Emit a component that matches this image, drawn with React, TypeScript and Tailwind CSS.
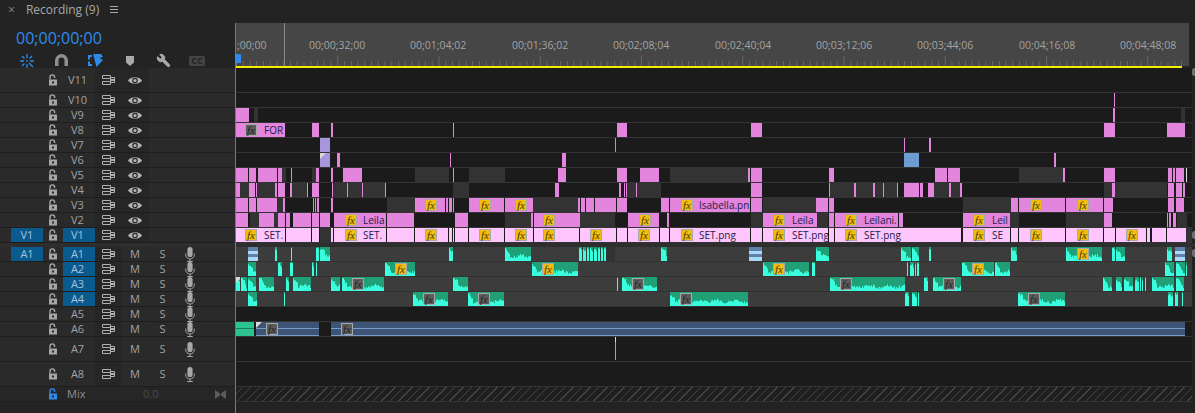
import { Wrench } from "lucide-react";

type Kind = "p" | "l" | "g" | "u" | "b" | "a" | "s" | "w" | "d" | "e";
// start x, end x (page pixels), kind, fx badge x (negative: grey badge), label, label x, corner triangle
type Clip = [number, number, Kind, number?, string?, number?, boolean?];

const ORIGIN = 235;

const kindClass: Record<Kind, string> = {
  p: "bg-[#e384dd]",
  l: "bg-[#fec6fd]",
  g: "bg-[#333333]",
  u: "bg-[#a994de]",
  b: "bg-[#6f9bd1]",
  a: "bg-[#21a078]",
  s: "bg-[linear-gradient(#5f80a8_0_4px,#a9d9f7_4px_7px,#5f80a8_7px_10px,#a9d9f7_10px_14px)]",
  w: "bg-[#dddddd]",
  d: "bg-[#333333]",
  e: "bg-[#2bc48f]",
};

const pinks = (list: number[][], kind: Kind = "p"): Clip[] => list.map(([a, b]) => [a, b, kind] as Clip);

const V10: Clip[] = pinks([[1114, 1115]]);
const V9: Clip[] = [[236, 249, "p"], [254, 258, "g"], [1113, 1115, "p"], [1181, 1185, "g"]];
const V8: Clip[] = [
  [236, 285, "p", -245, "FOR", 264],
  ...pinks([[312, 319], [331, 333], [453, 454], [617, 627], [751, 762], [1104, 1115], [1167, 1185]]),
];
const V7: Clip[] = [[320, 330, "u"], [615, 616, "u"], ...pinks([[904, 905], [929, 931]])];
const V6: Clip[] = [
  [320, 330, "u", undefined, undefined, undefined, true],
  ...pinks([[337, 340], [450, 451], [562, 566], [1054, 1056]]),
  [904, 919, "b"],
];
const V5: Clip[] = [
  ...pinks([[236, 248], [249, 256], [258, 277], [278, 282], [291, 292], [316, 319], [331, 333], [343, 362], [453, 454], [558, 566], [617, 627], [640, 659], [748, 750], [751, 762], [829, 834], [935, 947], [948, 960], [1063, 1065], [1104, 1115], [1168, 1172], [1173, 1175], [1176, 1184]]),
  ...pinks([[282, 286], [312, 316], [415, 449], [469, 505], [670, 748], [1019, 1063]], "g"),
  [1186, 1187, "w"],
];
const V4: Clip[] = [
  ...pinks([[240, 249], [257, 275], [292, 307], [333, 347], [348, 362], [363, 385], [453, 469], [627, 636], [637, 661], [830, 854], [856, 873], [875, 883], [884, 897], [934, 949], [951, 960], [1104, 1112], [1115, 1167]], "g"),
  ...pinks([[236, 240], [249, 255], [256, 257], [275, 277], [278, 285], [290, 292], [307, 308], [312, 319], [332, 333], [347, 348], [362, 363], [385, 386], [555, 559], [619, 621], [624, 625], [626, 627], [636, 637], [751, 762], [829, 830], [854, 856], [873, 875], [883, 884], [897, 898], [904, 919], [920, 923], [928, 934], [949, 951], [960, 962], [1112, 1115], [1168, 1174], [1176, 1182], [1183, 1185]]),
];
const V3: Clip[] = [
  ...pinks([[236, 248], [249, 256], [257, 277], [283, 285], [313, 314], [315, 316], [317, 319], [331, 333], [446, 448], [449, 452], [453, 454], [578, 580], [581, 585], [586, 594], [595, 616], [617, 627], [661, 669], [751, 762], [816, 828], [829, 834], [1011, 1018], [1104, 1113], [1168, 1174], [1176, 1184]]),
  ...pinks([[277, 283], [387, 415], [533, 578], [763, 816], [963, 1011]], "g"),
  [415, 445, "p", 425],
  [469, 504, "p", 479],
  [505, 533, "p", 515],
  [670, 750, "p", 681, "Isabella.pn", 699],
  [1019, 1065, "p", 1030],
  [1066, 1103, "p", 1077],
];
const V2: Clip[] = [
  ...pinks([[236, 248], [259, 274], [278, 285], [286, 290], [293, 311], [312, 319], [320, 330], [387, 414], [455, 468], [531, 533], [560, 580], [667, 669], [829, 834], [899, 903], [1104, 1112], [1167, 1168], [1169, 1171], [1173, 1176]]),
  ...pinks([[250, 259], [274, 278], [505, 531], [580, 615], [751, 763], [817, 828], [1010, 1019], [1066, 1104], [1177, 1187]], "g"),
  [334, 386, "p", 345, "Leila", 363],
  [534, 560, "p", 543],
  [628, 659, "p", 639],
  [763, 817, "p", 773, "Leila", 792],
  [835, 898, "p", 845, "Leilani.", 864],
  [963, 1010, "p", 973, "Leil", 992],
];
const V1: Clip[] = [
  [236, 285, "l", 245, "SET.", 264],
  ...pinks([[286, 311], [312, 319], [331, 333], [387, 414], [449, 452], [453, 454], [455, 468], [560, 579], [617, 627], [660, 669], [751, 762], [829, 834], [1011, 1018], [1104, 1115], [1147, 1150], [1152, 1166], [1167, 1186]], "l"),
  [320, 331, "g"],
  [334, 386, "l", 345, "SET.", 363],
  [415, 448, "l", 425],
  [469, 504, "l", 479],
  [505, 533, "l", 515],
  [534, 560, "l", 543],
  [580, 616, "l", 590],
  [628, 659, "l", 638],
  [670, 750, "l", 681, "SET.png", 699],
  [763, 828, "l", 773, "SET.png", 792],
  [835, 961, "l", 845, "SET.png", 864],
  [963, 1010, "l", 973, "SE", 992],
  [1019, 1065, "l", 1030],
  [1066, 1103, "l", 1077],
  [1116, 1146, "l", 1126],
  [1186, 1192, "g"],
];
const A1: Clip[] = [
  [248, 258, "s"],
  ...pinks([[275, 277], [291, 292], [316, 319], [320, 330], [449, 453], [505, 531], [579, 582], [583, 586], [587, 589], [590, 593], [594, 597], [598, 600], [601, 603], [604, 606], [661, 667], [816, 829], [901, 911], [912, 919], [929, 931], [1011, 1017], [1112, 1115], [1116, 1125], [1167, 1172]], "a"),
  [606, 615, "d"],
  [749, 762, "s"],
  [1066, 1102, "a", 1077],
  [1175, 1185, "s"],
];
const A2: Clip[] = [
  ...pinks([[248, 256], [278, 282], [290, 293], [312, 314], [316, 317], [812, 815], [907, 908], [910, 914], [915, 916], [917, 919], [995, 1010], [1165, 1174], [1176, 1185], [1186, 1187]], "a"),
  [385, 415, "a", 395],
  [532, 578, "a", 542],
  [763, 809, "a", 773],
  [962, 994, "a", 972],
];
const A3: Clip[] = [
  [236, 240, "a", undefined, undefined, undefined, true],
  ...pinks([[241, 247], [248, 256], [259, 274], [286, 289], [293, 311], [331, 340], [453, 468], [617, 618], [924, 928], [1103, 1112], [1116, 1122], [1124, 1133], [1135, 1139], [1140, 1141], [1142, 1143], [1145, 1146], [1152, 1174], [1176, 1184]], "a"),
  [342, 384, "a", -352],
  [622, 657, "a", -632],
  [830, 905, "a", -840],
  [933, 961, "a", -943],
];
const A4: Clip[] = [
  ...pinks([[248, 257], [284, 285], [905, 909], [912, 917], [918, 919], [1168, 1173], [1175, 1178], [1182, 1183]], "a"),
  [413, 448, "a", -423],
  [468, 504, "a", -478],
  [670, 748, "a", -680],
  [1018, 1065, "a", -1028],
];

type Track = { name: string; h: number; clips: Clip[]; video: boolean; patch?: boolean; src?: string; audioBg?: boolean };

const upper: Track[] = [
  { name: "V11", h: 25, clips: [], video: true },
  { name: "V10", h: 15, clips: V10, video: true },
  { name: "V9", h: 15, clips: V9, video: true },
  { name: "V8", h: 15, clips: V8, video: true },
  { name: "V7", h: 15, clips: V7, video: true },
  { name: "V6", h: 15, clips: V6, video: true },
  { name: "V5", h: 15, clips: V5, video: true },
  { name: "V4", h: 15, clips: V4, video: true },
  { name: "V3", h: 15, clips: V3, video: true },
  { name: "V2", h: 15, clips: V2, video: true },
  { name: "V1", h: 15, clips: V1, video: true, patch: true, src: "V1" },
];
const lower: Track[] = [
  { name: "A1", h: 15, clips: A1, video: false, patch: true, src: "A1", audioBg: true },
  { name: "A2", h: 15, clips: A2, video: false, patch: true, audioBg: true },
  { name: "A3", h: 15, clips: A3, video: false, patch: true, audioBg: true },
  { name: "A4", h: 15, clips: A4, video: false, patch: true, audioBg: true },
  { name: "A5", h: 15, clips: [], video: false },
  { name: "A6", h: 15, clips: [], video: false },
  { name: "A7", h: 25, clips: [], video: false },
  { name: "A8", h: 25, clips: [], video: false },
];

const rulerLabels: [string, number][] = [
  [";00;00", 237],
  ["00;00;32;00", 309],
  ["00;01;04;02", 410],
  ["00;01;36;02", 512],
  ["00;02;08;04", 613],
  ["00;02;40;04", 715],
  ["00;03;12;06", 816],
  ["00;03;44;06", 917],
  ["00;04;16;08", 1019],
  ["00;04;48;08", 1120],
];

function wavePath(w: number, seed: number) {
  let d = "M0 14";
  for (let x = 0; x < w; x++) {
    const n = Math.abs(Math.sin(x * 12.9898 + seed * 78.233) * 43758.5453) % 1;
    const slow = 0.5 + 0.5 * Math.sin(x * 0.35 + seed);
    const attack = x < 5 ? 8 - x : 0;
    const level = Math.min(13, 2 + attack + slow * 2.5 + n * 3);
    d += `L${x} ${14 - level}L${x + 1} ${14 - level}`;
  }
  return d + `L${w} 14Z`;
}

function Fx({ grey }: { grey?: boolean }) {
  return (
    <span
      className={`flex h-3 w-3 items-center justify-center border border-[#a8a8a8] font-['Liberation_Serif',serif] text-[11px] italic leading-none ${
        grey ? "bg-[#5c5c5c] text-[#222222]" : "bg-[#f2bd0c] text-[#4a3a10]"
      }`}
    >
      fx
    </span>
  );
}

function ClipBox({ clip }: { clip: Clip }) {
  const [a, b, kind, fx, label, labelX, corner] = clip;
  const w = b - a;
  return (
    <div className={`absolute top-0 bottom-0 overflow-hidden ${kindClass[kind]}`} style={{ left: a - ORIGIN, width: w }}>
      {kind === "a" && (
        <svg className="absolute inset-0 h-full w-full" viewBox={`0 0 ${w} 14`} preserveAspectRatio="none">
          <path d={wavePath(w, a)} fill="#3affdf" />
        </svg>
      )}
      {corner && (
        <svg className="absolute top-0 left-0 h-[6px] w-[6px]" viewBox="0 0 6 6">
          <polygon points="0,0 6,0 0,6" fill="#d8d8d8" />
        </svg>
      )}
      {fx !== undefined && (
        <div className="absolute top-px" style={{ left: Math.abs(fx) - a }}>
          <Fx grey={fx < 0} />
        </div>
      )}
      {label && (
        <span
          className="absolute top-0 text-[10px] leading-[14px] whitespace-nowrap text-[#24204a]"
          style={{ left: (labelX ?? a) - a }}
        >
          {label}
        </span>
      )}
    </div>
  );
}

function LockIcon({ blue }: { blue?: boolean }) {
  const c = blue ? "#2d8ceb" : "#a6a6a6";
  return (
    <svg width="10" height="12" viewBox="0 0 10 12">
      <path d="M2 5.5V3.2a2.3 2.3 0 0 1 4.6 0V4" fill="none" stroke={c} strokeWidth="1.4" />
      <path d="M1 5.5h8V11.5H1zM4 7.5v2h2v-2z" fill={c} fillRule="evenodd" />
    </svg>
  );
}

function SyncIcon() {
  return (
    <svg width="13" height="10" viewBox="0 0 13 10" fill="none" stroke="#b0b0b0">
      <path d="M.5.5h8v3h-8zM.5 6.5h8v3h-8z" />
      <path d="M8.5 2.5h4v5h-4z" />
      <path d="M9 4.5h3v1H9z" fill="#b0b0b0" />
    </svg>
  );
}

function EyeIcon() {
  return (
    <svg width="14" height="9" viewBox="0 0 14 9">
      <path d="M0 4.5C3 .2 11 .2 14 4.5 11 8.8 3 8.8 0 4.5Z" fill="#b4b4b4" />
      <circle cx="7" cy="4.5" r="2.8" fill="#2a2a2a" />
      <circle cx="7" cy="4.5" r="1.6" fill="#b4b4b4" />
    </svg>
  );
}

function MicIcon() {
  return (
    <svg width="10" height="15" viewBox="0 0 10 15" fill="none">
      <rect x="2.4" y="0" width="5.2" height="10" rx="2.6" fill="#a8a8a8" />
      <path d="M.7 6.5v1.2a4.3 4.3 0 0 0 8.6 0V6.5M5 12v2.4M2.2 14.5h5.6" stroke="#a8a8a8" />
    </svg>
  );
}

function TrackHeader({ t }: { t: Track }) {
  return (
    <div className="flex border-b border-[#1e1e1e] bg-[#2a2a2a] text-[#a2a2a2]" style={{ height: t.h }}>
      <div className="w-[11px]" />
      <div className={`flex w-8 items-center justify-center text-[11px] ${t.src ? "bg-[#0b5a8e] text-[#a4c4dc]" : ""}`}>{t.src}</div>
      <div className="flex w-5 items-center justify-center">
        <LockIcon />
      </div>
      <div className={`flex w-8 items-center justify-center pr-[3px] text-[11px] ${t.patch ? "bg-[#0b5a8e] text-[#a4c4dc]" : ""}`}>
        {t.name}
      </div>
      <div className="flex w-[26px] items-center justify-center bg-[#262626]">
        <SyncIcon />
      </div>
      {t.video ? (
        <div className="flex w-7 items-center justify-center bg-[#262626]">
          <EyeIcon />
        </div>
      ) : (
        <>
          <div className="flex w-7 items-center justify-center text-[11px]">M</div>
          <div className="flex w-[27px] items-center justify-center text-[11px]">S</div>
          <div className="flex w-[27px] items-center justify-center">
            <MicIcon />
          </div>
        </>
      )}
    </div>
  );
}

function TrackRow({ t }: { t: Track }) {
  return (
    <div className={`relative mr-[3px] border-b border-[#333333] ${t.audioBg ? "bg-[#3c3c3c]" : "bg-[#1b1b1b]"}`} style={{ height: t.h }}>
      {t.clips.map((c) => (
        <ClipBox key={`${c[0]}-${c[1]}`} clip={c} />
      ))}
    </div>
  );
}

function Toolbar() {
  return (
    <div className="flex h-[15px] items-center pl-[20px]">
      <div className="flex w-[35px]">
        <svg width="14" height="14" viewBox="0 0 14 14" stroke="#2d8ceb" strokeWidth="1.3" fill="none">
          <path d="M7 0v4M7 6v2M7 10v4M0 7h4M10 7h4M2 2l2.5 2.5M12 2 9.5 4.5M2 12l2.5-2.5M9 9l4 4" />
        </svg>
      </div>
      <div className="flex w-[33px]">
        <svg width="13" height="13" viewBox="0 0 13 13" fill="#8f8f8f">
          <path d="M0 12V6.5a6.5 6.5 0 0 1 13 0V12H9.5V6.5a3 3 0 0 0-6 0V12z" />
        </svg>
      </div>
      <div className="flex w-[38px]">
        <svg width="15" height="13" viewBox="0 0 15 13" fill="#2d8ceb">
          <path d="M0 1h4v2H2v2.5H0zM0 7.5h2V10h2v2H0zM5 0l10 6-6.5 7z" />
          <path d="M5 0h8l2 3-4 1z" />
        </svg>
      </div>
      <div className="flex w-[30px]">
        <svg width="8" height="10" viewBox="0 0 8 10" fill="#a8a8a8">
          <path d="M0 0h8v6.5L4 10 0 6.5z" />
        </svg>
      </div>
      <div className="flex w-[33px]">
        <Wrench size={15} className="-scale-x-100 fill-[#a8a8a8] text-[#a8a8a8]" strokeWidth={1.6} />
      </div>
      <div className="flex h-[10px] w-4 items-center justify-center rounded-[2px] bg-[#444444] text-[9px] leading-none font-bold text-[#242424]">
        CC
      </div>
    </div>
  );
}

function Ruler() {
  const ticks = Array.from({ length: 141 }, (_, i) => i);
  return (
    <div className="relative mr-[6px] ml-px h-[43px] bg-[#464646]">
      {rulerLabels.map(([text, x]) => (
        <span key={text} className="absolute top-[15px] text-[10.5px] leading-[14px] text-[#a3a3a3]" style={{ left: x - ORIGIN - 1 }}>
          {text}
        </span>
      ))}
      <div className="absolute top-0 left-[48px] h-full w-px bg-[#8c8c8c]" />
      <svg className="absolute bottom-0 left-0" width="953" height="12">
        {ticks.map((i) => (
          <line
            key={i}
            x1={0.5 + i * 6.75}
            x2={0.5 + i * 6.75}
            y1={i % 15 === 0 && i > 0 ? 2 : 7}
            y2={12}
            stroke="#666666"
          />
        ))}
      </svg>
    </div>
  );
}

export default function App() {
  return (
    <div className="relative h-[413px] w-[1195px] overflow-hidden bg-[#232323] font-['Open_Sans',sans-serif]">
      <div className="flex h-[23px] items-center gap-[11px] pb-1 pl-2 text-[12px] text-[#a8a8a8]">
        <span className="text-[12px] leading-none text-[#8a8a8a]">×</span>
        <span>Recording (9)</span>
        <svg width="8" height="7" viewBox="0 0 8 7" stroke="#a8a8a8">
          <path d="M0 .5h8M0 3.5h8M0 6.5h8" />
        </svg>
      </div>
      <div className="flex">
        <div className="w-[235px] shrink-0">
          <div className="h-[45px] bg-[#232323]">
            <div className="h-[30px] pt-[3px] pl-4 text-[16px] leading-[24px] text-[#2d8ceb]">00;00;00;00</div>
            <Toolbar />
          </div>
          {upper.map((t) => (
            <TrackHeader key={t.name} t={t} />
          ))}
          <div className="h-1 bg-[#2e2e2e]" />
          {lower.map((t) => (
            <TrackHeader key={t.name} t={t} />
          ))}
          <div className="flex h-[15px] items-center border-b border-[#1e1e1e] bg-[#262626] text-[11px]">
            <div className="flex w-[63px] justify-end pr-[5px]">
              <LockIcon blue />
            </div>
            <span className="ml-[4px] w-[76px] text-[#8f8f8f]">Mix</span>
            <span className="w-[72px] text-[#4c4c4c]">0.0</span>
            <svg width="11" height="9" viewBox="0 0 11 9" fill="#5c5c5c">
              <path d="M0 0l5 3.5V5.5L0 9zM11 0 6 3.5V5.5L11 9z" />
            </svg>
          </div>
        </div>
        <div className="w-[960px]">
          <Ruler />
          <div className="mr-[13px] h-[2px] bg-[#f5ee00]" />
          {upper.map((t) => (
            <TrackRow key={t.name} t={t} />
          ))}
          <div className="h-1 bg-[#2e2e2e]" />
          {lower.map((t) =>
            t.name === "A6" ? (
              <div key={t.name} className="relative mr-[3px] h-[15px] border-b border-[#333333] bg-[#1b1b1b]">
                <div className="absolute top-0 bottom-0 left-[1px] w-[18px] bg-[linear-gradient(#2bc48f_0_6px,#1a7a5c_6px_7px,#2bc48f_7px)]" />
                <div className="absolute top-0 bottom-0 left-[21px] w-[929px] bg-[linear-gradient(#3c5577_0_6px,#7b9cc8_6px_7px,#3c5577_7px_13px,#7b9cc8_13px)]" />
                <div className="absolute top-0 bottom-0 left-[84px] w-3 bg-[#1b1b1b]" />
                <svg className="absolute top-0 left-[21px] h-[6px] w-[6px]" viewBox="0 0 6 6">
                  <polygon points="0,0 6,0 0,6" fill="#d8d8d8" />
                </svg>
                <div className="absolute top-px left-[31px]">
                  <Fx grey />
                </div>
                <div className="absolute top-px left-[106px]">
                  <Fx grey />
                </div>
              </div>
            ) : t.name === "A7" ? (
              <div key={t.name} className="relative mr-[3px] h-[25px] border-b border-[#333333] bg-[#1b1b1b]">
                <div className="absolute top-0 left-[380px] h-[23px] w-px bg-[linear-gradient(#d8d8d8_0_5px,#8fa8d0_5px)]" />
              </div>
            ) : (
              <TrackRow key={t.name} t={t} />
            ),
          )}
          <div className="mr-[3px] h-[15px] border-b border-[#333333] bg-[repeating-linear-gradient(135deg,#1f1f1f_0_5px,#444444_5px_6px)]" />
        </div>
      </div>
      {/* playhead */}
      <div className="absolute top-[23px] bottom-0 left-[235px] w-px bg-[#3c86d6]" />
      <div className="absolute top-[54px] left-[235px] h-[9px] w-[6px] rounded-t-[1px] bg-[#2d8ceb]" />
      {/* scroll handles on the right edge */}
      <div className="absolute top-[68px] right-[-2px] h-2 w-[5px] rounded-full bg-[#6e6e6e]" />
      <div className="absolute top-[231px] right-[-2px] h-2 w-[5px] rounded-full bg-[#6e6e6e]" />
      <div className="absolute top-[249px] right-[-2px] h-2 w-[5px] rounded-full bg-[#6e6e6e]" />
    </div>
  );
}
